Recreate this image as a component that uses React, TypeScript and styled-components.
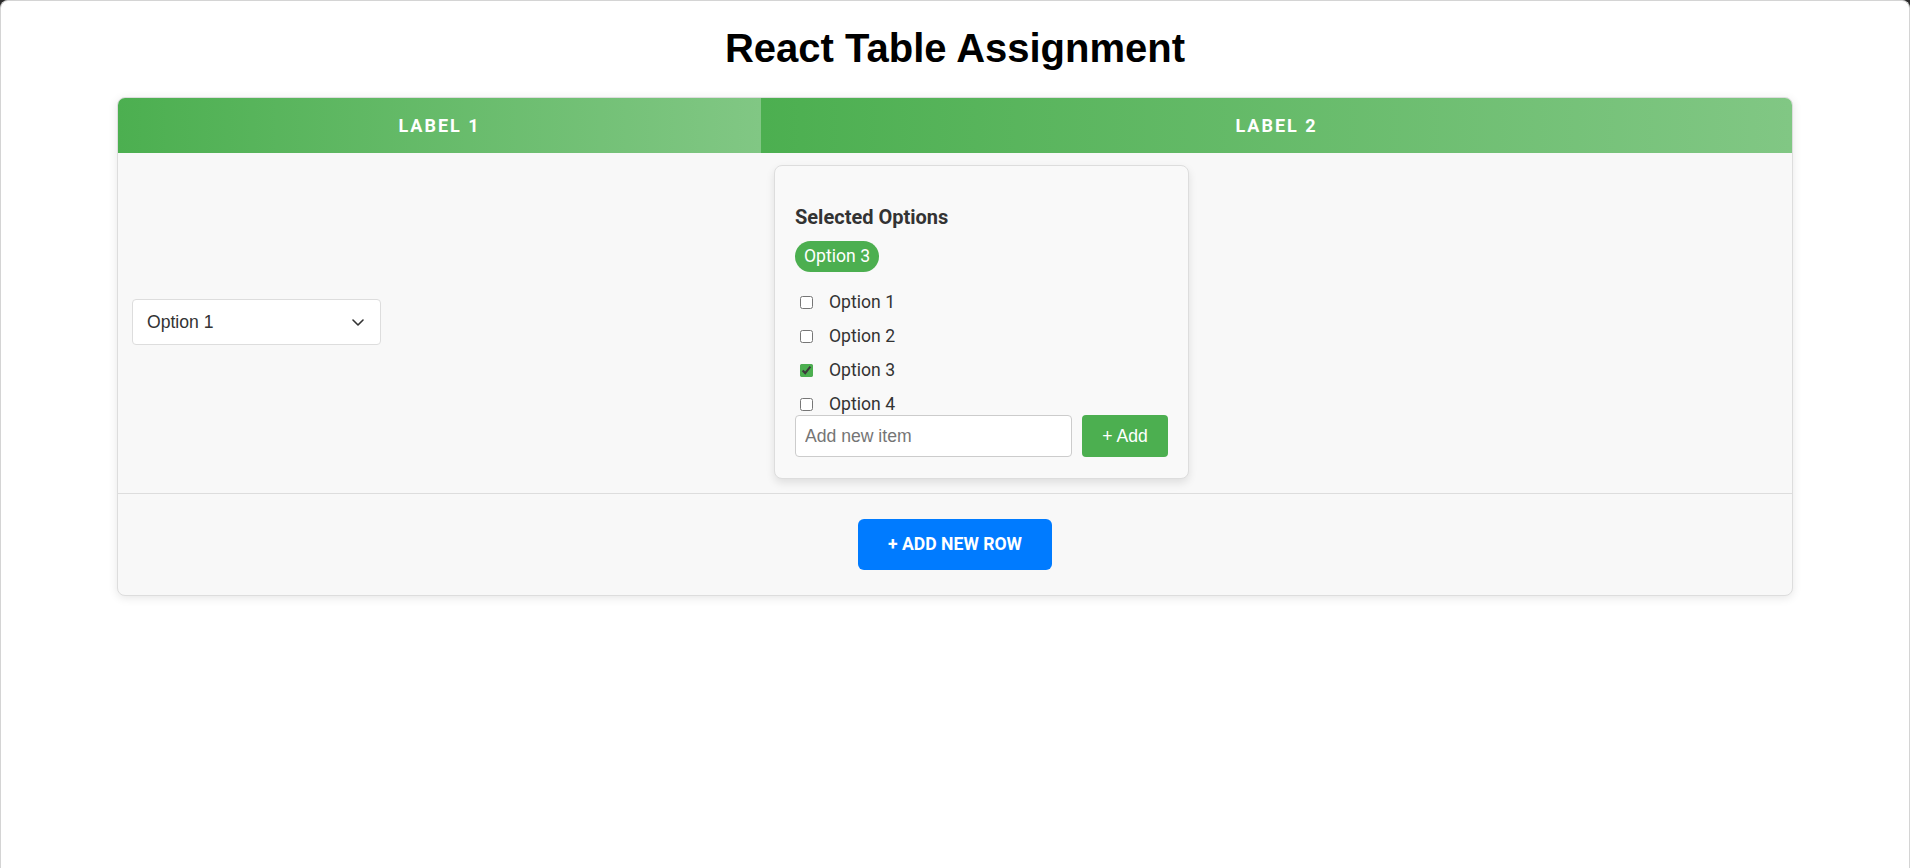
import React, { useState } from 'react';
import styled, { createGlobalStyle } from 'styled-components';

const GlobalStyle = createGlobalStyle`
  html { background: #2b2b2b; }
  body {
    margin: 0;
    min-height: 100vh;
    box-sizing: border-box;
    background: #ffffff;
    border: 1px solid #d4d4d4;
    border-bottom: none;
    border-radius: 8px 8px 0 0;
    font-family: Roboto, "Noto Sans", sans-serif;
    color: #333;
  }
  * { box-sizing: border-box; }
`;

const Page = styled.div`
  padding-top: 25px;
`;

const Title = styled.h1`
  margin: 0 0 26px;
  text-align: center;
  font-family: "Liberation Sans", Arial, sans-serif;
  font-size: 40px;
  font-weight: 700;
  color: #000;
`;

const Card = styled.div`
  width: 1676px;
  margin: 0 auto;
  border: 1px solid #ddd;
  border-radius: 8px;
  overflow: hidden;
  background: #f8f8f8;
  box-shadow: 0 2px 10px rgba(0, 0, 0, 0.1);
`;

const Row = styled.div<{ $divider?: boolean }>`
  display: grid;
  grid-template-columns: 643px 1fr;
  border-bottom: ${(p) => (p.$divider ? '1px solid #ddd' : 'none')};
`;

const HeaderCell = styled.div`
  background: linear-gradient(90deg, #4caf50, #81c784);
  color: #fff;
  text-transform: uppercase;
  font-weight: 700;
  font-size: 18px;
  letter-spacing: 2px;
  line-height: 23px;
  padding: 16px;
  text-align: center;
`;

const Cell = styled.div<{ $padLeft: number }>`
  padding: 12px 13px 14px ${(p) => p.$padLeft}px;
  display: flex;
  align-items: center;
`;

const SelectWrap = styled.div`
  position: relative;
  width: 249px;
`;

const Select = styled.select`
  appearance: none;
  width: 100%;
  height: 46px;
  padding: 0 14px;
  border: 1px solid #ddd;
  border-radius: 4px;
  background: #fff;
  font-family: "Liberation Sans", Arial, sans-serif;
  font-size: 17.6px;
  color: #333;
  outline: none;
`;

const Chevron = styled.svg`
  position: absolute;
  right: 17px;
  top: 50%;
  margin-top: -3px;
  pointer-events: none;
`;

const Popup = styled.div`
  width: 415px;
  padding: 20px 20px 21px;
  border: 1px solid #ddd;
  border-radius: 8px;
  background: #f9f9f9;
  box-shadow: 0 4px 8px rgba(0, 0, 0, 0.1);
`;

const PopupTitle = styled.h4`
  margin: 20px 0 12px;
  font-size: 20px;
  line-height: 23px;
  font-weight: 700;
  color: #333;
`;

const Chips = styled.div`
  display: flex;
  gap: 6px;
  flex-wrap: wrap;
`;

const Chip = styled.span`
  background: #4caf50;
  color: #fff;
  border-radius: 16px;
  padding: 5px 9px;
  font-size: 17.6px;
  line-height: 21px;
`;

const OptionList = styled.div`
  margin-top: 13px;
  max-height: 130px;
  overflow: hidden;
`;

const OptionRow = styled.label`
  display: flex;
  align-items: center;
  height: 34px;
  font-size: 17.6px;
  color: #333;
  cursor: pointer;
`;

const Checkbox = styled.input`
  margin: 3px 3px 3px 5px;
  width: 13px;
  height: 13px;
  accent-color: #4caf50;
`;

const OptionText = styled.span`
  margin-left: 13px;
`;

const AddRow = styled.div`
  display: flex;
  gap: 10px;
`;

const AddInput = styled.input`
  flex: 1;
  height: 42px;
  padding: 0 9px;
  border: 1px solid #ccc;
  border-radius: 4px;
  background: #fff;
  font-family: "Liberation Sans", Arial, sans-serif;
  font-size: 17.6px;
  color: #333;
  outline: none;
`;

const AddButton = styled.button`
  width: 86px;
  height: 42px;
  border: none;
  border-radius: 4px;
  background: #4caf50;
  color: #fff;
  font-family: "Liberation Sans", Arial, sans-serif;
  font-size: 17.6px;
  cursor: pointer;
`;

const Footer = styled.div`
  padding: 25px;
  display: flex;
  justify-content: center;
`;

const NewRowButton = styled.button`
  padding: 15px 30px;
  border: none;
  border-radius: 6px;
  background: #007bff;
  color: #fff;
  font-family: Roboto, sans-serif;
  font-weight: 700;
  font-size: 17.6px;
  line-height: 21px;
  text-transform: uppercase;
  cursor: pointer;
`;

export default function App() {
  const [options, setOptions] = useState(['Option 1', 'Option 2', 'Option 3', 'Option 4']);
  const [selected, setSelected] = useState<string[]>(['Option 3']);
  const [newItem, setNewItem] = useState('');

  const toggle = (o: string) =>
    setSelected((s) => (s.includes(o) ? s.filter((x) => x !== o) : [...s, o]));

  const add = () => {
    const v = newItem.trim();
    if (v && !options.includes(v)) setOptions([...options, v]);
    setNewItem('');
  };

  return (
    <>
      <GlobalStyle />
      <Page>
        <Title>React Table Assignment</Title>
        <Card>
          <Row>
            <HeaderCell>Label 1</HeaderCell>
            <HeaderCell>Label 2</HeaderCell>
          </Row>
          <Row $divider>
            <Cell $padLeft={14}>
              <SelectWrap>
                <Select defaultValue="Option 1">
                  <option>Option 1</option>
                  <option>Option 2</option>
                  <option>Option 3</option>
                  <option>Option 4</option>
                </Select>
                <Chevron width="12" height="7" viewBox="0 0 12 7">
                  <path d="M1 1 L6 6 L11 1" fill="none" stroke="#333" strokeWidth="1.6" strokeLinecap="round" strokeLinejoin="round" />
                </Chevron>
              </SelectWrap>
            </Cell>
            <Cell $padLeft={13}>
              <Popup>
                <PopupTitle>Selected Options</PopupTitle>
                <Chips>
                  {selected.map((s) => (
                    <Chip key={s}>{s}</Chip>
                  ))}
                </Chips>
                <OptionList>
                  {options.map((o) => (
                    <OptionRow key={o}>
                      <Checkbox type="checkbox" checked={selected.includes(o)} onChange={() => toggle(o)} />
                      <OptionText>{o}</OptionText>
                    </OptionRow>
                  ))}
                </OptionList>
                <AddRow>
                  <AddInput placeholder="Add new item" value={newItem} onChange={(e) => setNewItem(e.target.value)} />
                  <AddButton onClick={add}>+ Add</AddButton>
                </AddRow>
              </Popup>
            </Cell>
          </Row>
          <Footer>
            <NewRowButton>+ Add New Row</NewRowButton>
          </Footer>
        </Card>
      </Page>
    </>
  );
}
